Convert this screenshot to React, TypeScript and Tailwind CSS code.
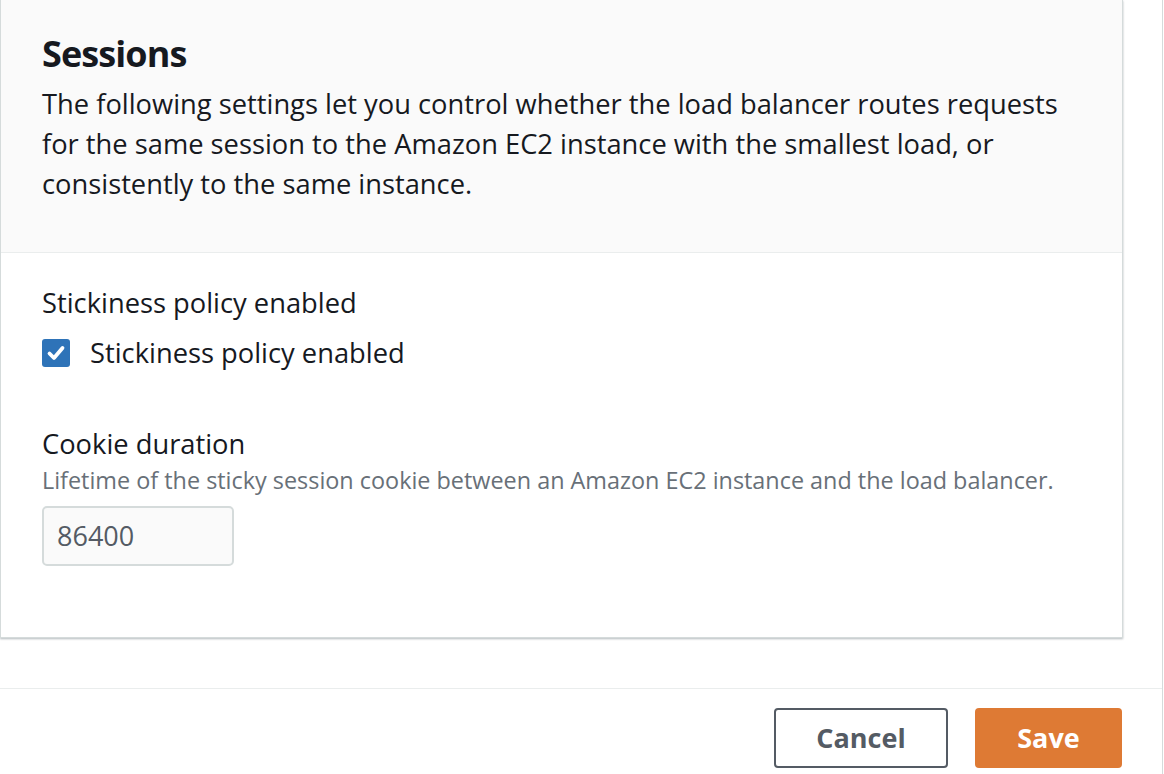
export default function App() {
  return (
    <div
      className="h-[774px] w-[1164px] overflow-hidden bg-white text-[#16191f]"
      style={{ fontFamily: '"Open Sans", "Noto Sans", Arial, sans-serif' }}
    >
      <div className="flex h-full w-[1163px] flex-col border-r border-[#d5dbdb]">
        <section className="w-[1123px] border-x border-b border-[#d5dbdb] shadow-[0_1px_2px_rgba(0,28,36,0.3)]">
          <div className="h-[253px] border-b border-[#eaeded] bg-[#fafafa] px-[41px] pt-[32px]">
            <h2 className="text-[36px] font-bold leading-[44px] tracking-[-0.9px]">Sessions</h2>
            <p className="mt-[8px] text-[27.3px] leading-[40px]">
              The following settings let you control whether the load balancer routes requests for the same session to
              the Amazon EC2 instance with the smallest load, or consistently to the same instance.
            </p>
          </div>
          <div className="h-[384px] px-[41px] pt-[34px]">
            <div className="text-[27.3px] leading-[32px]">Stickiness policy enabled</div>
            <label className="mt-[18px] flex items-center gap-[20px] text-[27.3px] leading-[32px]">
              <span className="flex h-[28px] w-[28px] items-center justify-center rounded-[3px] bg-[#2e73b8]">
                <svg width="22" height="22" viewBox="0 0 22 22" fill="none">
                  <path d="M4.5 11.5l4.5 4.5 8.5-10" stroke="white" strokeWidth="3.8" strokeLinecap="round" strokeLinejoin="round" />
                </svg>
              </span>
              Stickiness policy enabled
            </label>
            <div className="mt-[59px] text-[27.3px] leading-[32px]">Cookie duration</div>
            <div className="mt-[5px] text-[23.4px] leading-[30px] text-[#687078]">
              Lifetime of the sticky session cookie between an Amazon EC2 instance and the load balancer.
            </div>
            <div className="mt-[11px] flex h-[60px] w-[192px] items-center rounded-[5px] border-2 border-[#d5dbdb] bg-[#fafafa] px-[13px] text-[27px] text-[#545b64]">
              86400
            </div>
          </div>
        </section>
        <div className="mt-[50px] flex justify-end gap-[27px] border-t border-[#eaeded] pr-[40px] pt-[19px]">
          <button className="h-[60px] w-[174px] rounded-[4px] border-2 border-[#545b64] bg-white text-[27px] font-bold text-[#545b64]">
            Cancel
          </button>
          <button className="h-[60px] w-[147px] rounded-[4px] bg-[#de7a34] text-[27px] font-bold text-white">
            Save
          </button>
        </div>
      </div>
    </div>
  );
}
